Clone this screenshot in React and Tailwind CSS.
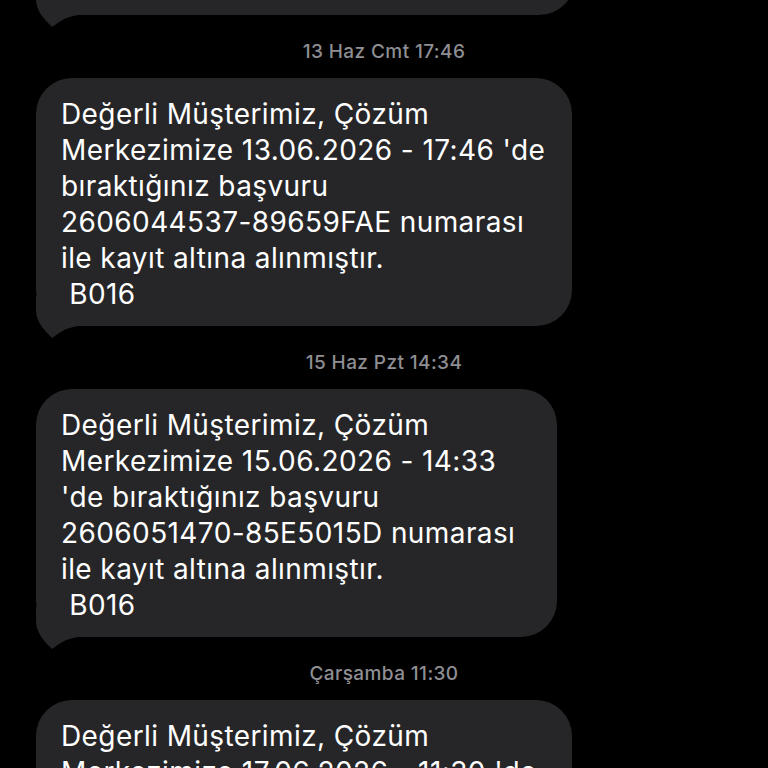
const MESSAGES = [
  {
    stamp: null,
    width: 'w-[539px]',
    lines: null,
  },
  {
    stamp: '13 Haz Cmt 17:46',
    width: 'w-[536px]',
    lines: ['Değerli Müşterimiz, Çözüm', "Merkezimize 13.06.2026 - 17:46 'de", 'bıraktığınız başvuru', '2606044537-89659FAE numarası', 'ile kayıt altına alınmıştır.', ' B016'],
  },
  {
    stamp: '15 Haz Pzt 14:34',
    width: 'w-[521px]',
    lines: ['Değerli Müşterimiz, Çözüm', 'Merkezimize 15.06.2026 - 14:33', "'de bıraktığınız başvuru", '2606051470-85E5015D numarası', 'ile kayıt altına alınmıştır.', ' B016'],
  },
  {
    stamp: 'Çarşamba 11:30',
    width: 'w-[536px]',
    lines: ['Değerli Müşterimiz, Çözüm', "Merkezimize 17.06.2026 - 11:30 'de"],
  },
];

const Tail = () => (
  <svg className="absolute left-0 -bottom-[14px]" width="44" height="44" viewBox="0 0 44 44">
    <path d="M0 0 L0 14 C0 26 8 34 16 42 C22 38 28 32 42 30 L42 0 Z" fill="#262628" />
  </svg>
);

const Bubble = ({ lines, width }) => (
  <div className={`relative ${width} ml-[36px] rounded-[36px] bg-[#262628] pl-[25px] pr-4 pt-[18px] pb-[14px]`}>
    <Tail />
    {lines ? (
      <div className="relative text-[28px] leading-[36px] tracking-[0.4px] text-white whitespace-pre">
        {lines.map((l, i) => <div key={i}>{l}</div>)}
      </div>
    ) : (
      <div className="h-[216px]" />
    )}
  </div>
);

export default function App() {
  return (
    <div className="h-[768px] w-[768px] overflow-hidden bg-black" style={{ fontFamily: 'Inter, "Noto Sans", sans-serif' }}>
      <div className="flex flex-col -mt-[233px]">
        {MESSAGES.map((m, i) => (
          <div key={i} className="flex flex-col">
            {m.stamp && (
              <div className="h-[63px] pt-[26px] text-center text-[19px] leading-[22px] tracking-[0.4px] font-medium text-[#8e8e93]">
                {m.stamp}
              </div>
            )}
            <Bubble lines={m.lines} width={m.width} />
          </div>
        ))}
      </div>
    </div>
  );
}
